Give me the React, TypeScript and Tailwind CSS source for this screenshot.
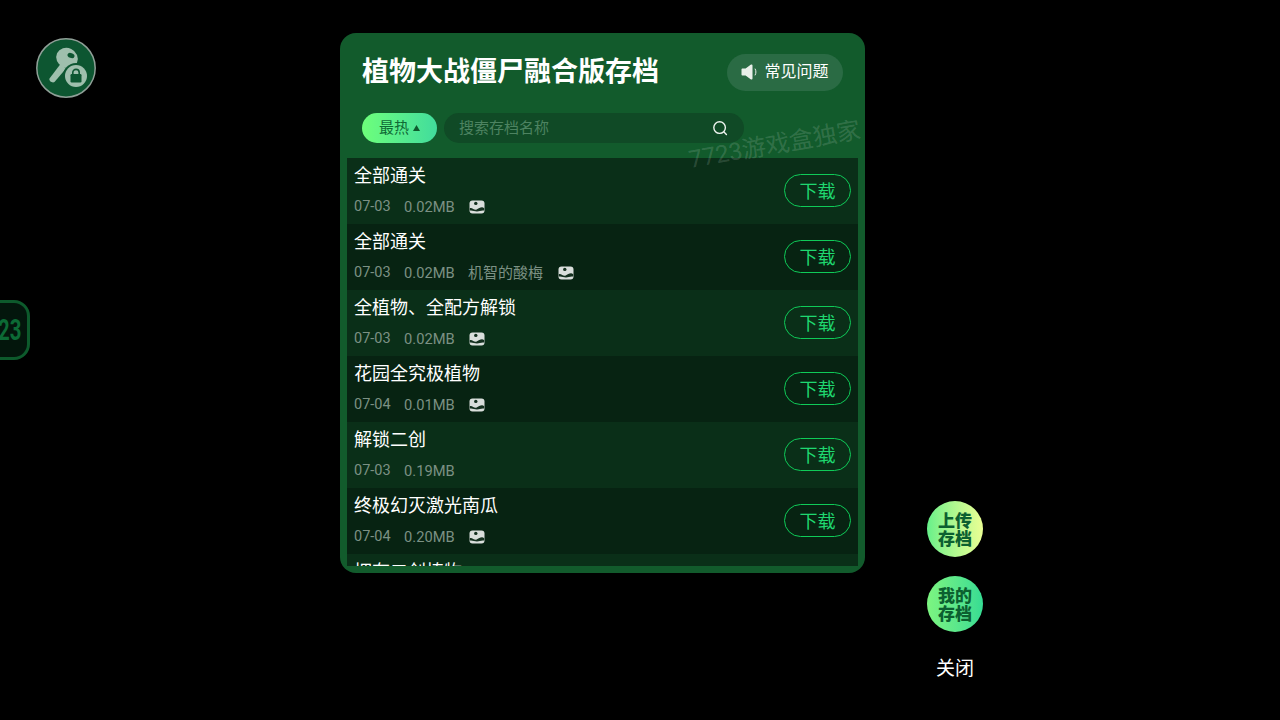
import React from "react";

interface SaveRow {
  name: string;
  date: string;
  size: string;
  author?: string;
  hasPic: boolean;
}

const rows: SaveRow[] = [
  { name: "全部通关", date: "07-03", size: "0.02MB", hasPic: true },
  { name: "全部通关", date: "07-03", size: "0.02MB", author: "机智的酸梅", hasPic: true },
  { name: "全植物、全配方解锁", date: "07-03", size: "0.02MB", hasPic: true },
  { name: "花园全究极植物", date: "07-04", size: "0.01MB", hasPic: true },
  { name: "解锁二创", date: "07-03", size: "0.19MB", hasPic: false },
  { name: "终极幻灭激光南瓜", date: "07-04", size: "0.20MB", hasPic: true },
  { name: "拥有二创植物", date: "07-03", size: "0.02MB", hasPic: true },
];

const PicIcon = () => (
  <svg width="16" height="14" viewBox="0 0 16 14" className="block ml-[1px]">
    <rect x="0.5" y="0.5" width="15" height="13" rx="3" fill="#d9dedb" />
    <circle cx="6.8" cy="3.4" r="1.7" fill="#14301f" />
    <path d="M0.8 8.2C3 6.8 5 10.6 7.6 9.6C10 8.6 12.6 6 15.2 8.2V10.6C12.6 10 10.5 11.4 8 11.4C5.5 11.4 3 10 0.8 10.6Z" fill="#14301f" />
  </svg>
);

const SpeakerIcon = () => (
  <svg width="17" height="18" viewBox="0 0 17 18">
    <path d="M0.5 6.4C0.5 5.8 1 5.4 1.6 5.4H4.6L10 1.6C10.8 1.1 11.5 1.5 11.5 2.4V15.6C11.5 16.5 10.8 16.9 10 16.4L4.6 12.6H1.6C1 12.6 0.5 12.2 0.5 11.6Z" fill="#e8efe9" />
    <path d="M14.2 6C15.2 7.8 15.2 10.2 14.2 12" stroke="#e8efe9" strokeWidth="1" fill="none" strokeLinecap="round" />
  </svg>
);

const SearchIcon = () => (
  <svg width="16" height="16" viewBox="0 0 16 16" fill="none" stroke="#eef4ef" strokeWidth="1.4">
    <circle cx="7.6" cy="7.6" r="5.8" />
    <path d="M12 12L14.4 14.4" strokeLinecap="round" />
  </svg>
);

const KeyIcon = () => (
  <svg width="60" height="60" viewBox="0 0 60 60">
    <circle cx="30" cy="30" r="29.2" fill="#0d5631" stroke="#8f9f97" strokeWidth="1.5" />
    <path d="M13.5 40.5L24.5 26L30 30.5L18.5 44C16.5 45.5 12.5 43 13.5 40.5Z" fill="#9fbfad" />
    <ellipse cx="31" cy="20" rx="11" ry="10" fill="#9fbfad" transform="rotate(25 31 20)" />
    <ellipse cx="35" cy="17.5" rx="3.6" ry="2.5" fill="#0d5631" transform="rotate(20 35 17.5)" />
    <circle cx="40" cy="38" r="13" fill="#0d5631" />
    <circle cx="40" cy="38" r="11" fill="#9fbfad" />
    <rect x="34.5" y="36" width="11" height="8.5" rx="1.2" fill="#0d5631" />
    <path d="M36.8 36.5V34.5C36.8 32.6 38.2 31.4 40 31.4C41.8 31.4 43.2 32.6 43.2 34.5V36.5" stroke="#0d5631" strokeWidth="1.6" fill="none" />
  </svg>
);

const RoundAction = ({ top, bottom, bg }: { top: string; bottom: string; bg: string }) => (
  <div className={`w-14 h-14 pt-[2px] rounded-full flex flex-col items-center justify-center text-[#0c6030] text-[17px] leading-[18px] font-black ${bg}`}>
    <span>{top}</span>
    <span>{bottom}</span>
  </div>
);

const App: React.FC = () => {
  return (
    <div
      className="relative w-[1280px] h-[720px] overflow-hidden bg-black flex items-start"
      style={{ fontFamily: 'Roboto, "Noto Sans CJK SC", sans-serif' }}
    >
      <div className="absolute left-[36px] top-[38px]">
        <KeyIcon />
      </div>

      <div className="absolute left-[-30px] top-[300px] w-[60px] h-[60px] rounded-[16px] border-[3px] border-[#0d5a2c] bg-[#03160c] flex items-center justify-end pr-[6px]">
        <span className="text-[#0c6a35] text-[30px] font-bold scale-x-[0.68] origin-right leading-none">23</span>
      </div>

      <div className="relative ml-[340px] mt-[33px] w-[525px] h-[540px] rounded-[16px] bg-[#125b2c] flex flex-col overflow-hidden">
        <div className="flex items-center justify-between pl-[22px] pr-[22px] h-[78px]">
          <h1 className="text-[27px] leading-[38px] font-bold text-white">植物大战僵尸融合版存档</h1>
          <div className="h-[37px] w-[116px] rounded-full bg-[#2a6b44] flex items-center justify-center gap-[6px] text-white text-[16px]">
            <SpeakerIcon />
            <span>常见问题</span>
          </div>
        </div>

        <div className="flex items-center gap-[7px] pl-[22px] h-[30px] mt-[2px]">
          <div className="w-[75px] h-[30px] rounded-full bg-gradient-to-r from-[#6dff7a] to-[#41dc9c] flex items-center justify-center gap-[4px] text-[#0f6a36] text-[15px]">
            <span>最热</span>
            <svg width="7" height="6" viewBox="0 0 7 6">
              <path d="M3.5 0L7 6H0Z" fill="#0f5a2d" />
            </svg>
          </div>
          <div className="w-[300px] h-[30px] rounded-full bg-[#104a26] flex items-center justify-between pl-[15px] pr-[16px]">
            <span className="text-[15px] text-[#4d8361]">搜索存档名称</span>
            <SearchIcon />
          </div>
        </div>

        <div className="mx-[7px] mt-[15px] h-[408px] overflow-hidden flex flex-col">
          {rows.map((row, i) => (
            <div
              key={i}
              className={`h-[66px] shrink-0 flex items-center justify-between pl-[7px] pr-[7px] ${
                i % 2 === 0 ? "bg-[#0a2f18]" : "bg-[#072312]"
              }`}
            >
              <div className="flex flex-col -mt-[1px]">
                <div className="text-white text-[18px] leading-[26px] mt-[1px]">{row.name}</div>
                <div className="flex items-center gap-[14px] mt-[6px] h-[24px] text-[15px] leading-[20px] text-[#7c9184]">
                  <span className="w-[36px] text-[14.5px] -mt-[1px] whitespace-nowrap">{row.date}</span>
                  <span className="w-[50px] text-[14.7px] whitespace-nowrap">{row.size}</span>
                  {row.author && <span>{row.author}</span>}
                  {row.hasPic && <PicIcon />}
                </div>
              </div>
              <div className="w-[67px] h-[33px] -mt-[1px] pt-[2px] rounded-full border border-[#0fcb58] flex items-center justify-center text-[#1fd870] text-[18px]">
                下载
              </div>
            </div>
          ))}
        </div>

        <div className="absolute left-[349px] top-[112px] -rotate-[10deg] origin-left text-[24px] leading-[30px] text-white/15 whitespace-nowrap">
          7723游戏盒独家
        </div>
      </div>

      <div className="ml-[62px] mt-[501px] flex flex-col items-center gap-[19px]">
        <RoundAction top="上传" bottom="存档" bg="bg-gradient-to-r from-[#65f08a] to-[#eaff94]" />
        <RoundAction top="我的" bottom="存档" bg="bg-gradient-to-r from-[#7cf580] to-[#35dc93]" />
        <div className="text-white text-[19px] leading-[28px] mt-[4px]">关闭</div>
      </div>
    </div>
  );
};

export default App;
